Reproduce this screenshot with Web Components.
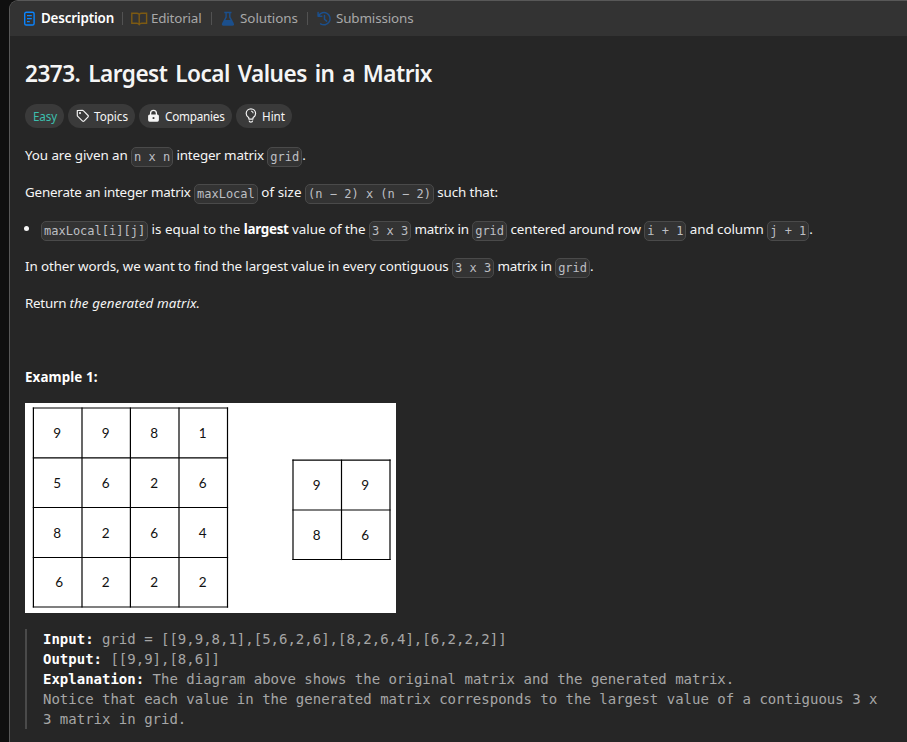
<!DOCTYPE html>
<html lang="en">
<head>
<meta charset="utf-8">
<title>2373. Largest Local Values in a Matrix</title>
<style>
html,body{margin:0;height:100%;background:#0f0f0f;overflow:hidden}
body{font:13.4px/20px "Noto Sans","Open Sans",sans-serif;color:#f5f5f5}
</style>
</head>
<body>
<problem-page></problem-page>
<script>
/* Text run that spreads its letters over a given width. */
class TextRun extends HTMLElement {
  connectedCallback() {
    this.attachShadow({mode: 'open'}).innerHTML =
      '<style>:host{display:inline-block;white-space:pre;text-indent:0}span{display:inline-block}</style><span><slot></slot></span>';
    const w = parseFloat(this.getAttribute('w'));
    this.style.width = w + 'px';
    const span = this.shadowRoot.querySelector('span');
    const natural = span.getBoundingClientRect().width;
    span.style.letterSpacing = ((w - natural) / this.textContent.length) + 'px';
  }
}

class InlineCode extends HTMLElement {
  constructor() {
    super();
    this.attachShadow({mode: 'open'}).innerHTML = `<style>
:host{display:inline-block;box-sizing:border-box;height:20px;padding:2px;border:1px solid #4a4a4a;border-radius:5px;background:#333;color:#bdbfc3;font:12px/14px "DejaVu Sans Mono",monospace;white-space:pre;vertical-align:-1px;margin:-4px 0}
</style><slot></slot>`;
  }
}

class TabItem extends HTMLElement {
  constructor() {
    super();
    this.attachShadow({mode: 'open'}).innerHTML = `<style>
:host{display:flex;align-items:center;color:#a8a8a8;box-sizing:border-box;height:20px}
:host([active]){color:#fff;font-weight:600}
::slotted(svg){flex:none;display:block}
::slotted(text-run){margin-top:-2px}
</style><slot name="icon"></slot><slot></slot>`;
  }
}

class TagChip extends HTMLElement {
  constructor() {
    super();
    this.attachShadow({mode: 'open'}).innerHTML = `<style>
:host{display:flex;align-items:center;box-sizing:border-box;height:24px;border-radius:12px;background:#3a3a3a;font-size:11.7px;padding-left:8px}
::slotted(svg){flex:none;display:block}
::slotted(text-run){margin-top:-1px}
</style><slot name="icon"></slot><slot></slot>`;
  }
}

/* Drawing of the source matrix and the resulting matrix. */
class MatrixFigure extends HTMLElement {
  connectedCallback() {
    const line = (x1, y1, x2, y2) => `<path d="M${x1} ${y1}H${x2}V${y2}H${x1}Z"/>`;
    const grid = (xs, ys, rows, dx = 0) => {
      let s = '';
      const xe = xs[xs.length - 1], ye = ys[ys.length - 1];
      xs.forEach(x => s += line(x - .6, ys[0] - .6, x + .6, ye + .6));
      ys.forEach(y => s += line(xs[0] - .6, y - .6, xe + .6, y + .6));
      rows.forEach((r, i) => r.forEach((n, j) => {
        const cx = (xs[j] + xs[j + 1]) / 2 - .5 + (dx && i === 3 && j === 0 ? dx : 0);
        s += `<text x="${cx}" y="${(ys[i] + ys[i + 1]) / 2 + 5.2}">${n}</text>`;
      }));
      return s;
    };
    this.attachShadow({mode: 'open'}).innerHTML = `<style>
:host{display:block;width:371px;height:210px;background:#fff}
svg{display:block}text{font:13.5px Lato,sans-serif;text-anchor:middle;fill:#111}
</style><svg width="371" height="210" fill="#000">
${grid([8.4, 57, 105.4, 154, 202.5], [5, 54.8, 104.5, 154.5, 204], [[9,9,8,1],[5,6,2,6],[8,2,6,4],[6,2,2,2]], 2)}
${grid([268, 316.5, 365], [57.2, 107, 156.5], [[9,9],[8,6]])}
</svg>`;
  }
}

class ExampleBlock extends HTMLElement {
  constructor() {
    super();
    this.attachShadow({mode: 'open'}).innerHTML = `<style>
:host{display:block;border-left:2px solid #4a4a4a;padding-left:16px;height:100px;font:14px/20px "DejaVu Sans Mono",monospace;color:#a6a6a6}
::slotted(div){white-space:pre}
</style><slot></slot>`;
  }
}

const page = document.createElement('template');
page.innerHTML = `<style>
:host{display:block;height:742px;padding-left:9px}
main{box-sizing:border-box;height:760px;border:1px solid #585858;border-right:0;border-radius:9px 0 0 0;background:#262626;overflow:hidden}
nav{display:flex;align-items:center;height:35px;background:#333;padding-left:13px;box-sizing:border-box}
nav i{width:1px;height:13px;background:#525252}
section{padding:25px 20px 0 15px}
h1{margin:0;font-size:22.6px;line-height:26px;font-weight:600;height:26px;word-spacing:2.5px}
.chips{display:flex;gap:4px;margin-top:17px}
p{margin:17px 0 0;height:20px;white-space:nowrap}
li{display:flex;align-items:center}
ul{list-style:none;margin:17px 0 0;padding:0;height:20px}
ul .row{white-space:nowrap;height:20px}
.dot{width:5px;height:5px;border-radius:50%;background:#f5f5f5;margin:0 12px 2px -1px}
matrix-figure{margin-top:16px}
example-block{margin-top:16px}
b{color:#fff}
</style>
<main>
<nav>
<tab-item active style="width:99px"><svg slot="icon" width="18" height="16" viewBox="0 0 18 16" fill="none" stroke="#0a84ff" stroke-width="1.4"><rect x="1.7" y="1.2" width="9.4" height="12.8" rx="1.6"/><path d="M4 4.6h4.8M4 7.6h4.8M4 10.6h2.8"/></svg><text-run w="73">Description</text-run></tab-item>
<i></i>
<tab-item style="width:88px;padding-left:8px"><svg slot="icon" width="20" height="16" viewBox="0 0 20 16" fill="none" stroke="#7d5a12" stroke-width="1.4"><path d="M8.2 3.4Q7.3 2.3 5.7 2.3H.8V12.3H5.8Q7.4 12.3 8.2 13.5Q9 12.3 10.6 12.3H15.6V2.3H10.7Q9.1 2.3 8.2 3.4V13.2"/></svg><text-run w="50.5">Editorial</text-run></tab-item>
<i></i>
<tab-item style="width:95px;padding-left:9px"><svg slot="icon" width="19" height="16" viewBox="0 0 19 16" fill="#1b4f8c"><path d="M3.3 .8H10.5V2.2H9.5V6.1L12.7 12Q13.8 14.8 11.4 14.8H2.5Q.1 14.8 1.2 12L4.4 6.1V2.2H3.3ZM5.8 2.2V6.5L4.4 9H9.5L8.1 6.5V2.2Z" fill-rule="evenodd"/></svg><text-run w="58">Solutions</text-run></tab-item>
<i></i>
<tab-item style="padding-left:9px"><svg slot="icon" width="19" height="16" viewBox="0 0 19 16" fill="none" stroke="#1b4f8c" stroke-width="1.5"><path d="M1.1 1.5V5.2H4.8M1.6 4.8A6.1 6.1 0 1 1 3.6 12.8M7.5 4.5V8.2L9.6 10.1" stroke-linecap="round" stroke-linejoin="round"/></svg><text-run w="77.5">Submissions</text-run></tab-item>
</nav>
<section>
<h1><text-run w="407">2373. Largest Local Values in a Matrix</text-run></h1>
<div class="chips">
<tag-chip style="width:39px;color:#3cbfae"><text-run w="24">Easy</text-run></tag-chip>
<tag-chip style="width:67px"><svg slot="icon" width="18" height="14" viewBox="0 0 18 14" fill="none" stroke="#f0f0f0" stroke-width="1.2" stroke-linejoin="round"><path d="M1.3 1.5L6.4 1.3Q7 1.3 7.5 1.8L12.1 6.5Q12.7 7.2 12.1 7.8L8 12.1Q7.3 12.7 6.6 12.1L1.8 7.4Q1.3 6.9 1.3 6.2Z"/><circle cx="4" cy="4.1" r=".45"/></svg><text-run w="34">Topics</text-run></tag-chip>
<tag-chip style="width:93px"><svg slot="icon" width="18" height="14" viewBox="0 0 18 14"><path d="M3.6 6V4.2a2.9 2.9 0 0 1 5.8 0V6" fill="none" stroke="#f5f5f5" stroke-width="1.3"/><path d="M2.6 5.5H10.4Q11.9 5.5 11.9 7V11Q11.9 12.7 10.4 12.7H2.6Q1.1 12.7 1.1 11V7Q1.1 5.5 2.6 5.5ZM6.5 7.9a1.1 1.1 0 1 0 .01 0Z" fill="#f5f5f5" fill-rule="evenodd"/></svg><text-run w="59.5">Companies</text-run></tag-chip>
<tag-chip style="width:56px"><svg slot="icon" width="18" height="16" viewBox="0 0 18 16" fill="none" stroke="#f0f0f0" stroke-width="1.2"><path d="M5 11.2L4.6 9.5Q2.2 8 2.2 5.6A4.7 4.7 0 0 1 11.6 5.6Q11.6 8 9.2 9.5L8.8 11.2ZM5.1 12.7Q5.4 14.2 6.9 14.2T8.7 12.7M7 3Q9 3.4 9.2 5.2"/></svg><text-run w="23">Hint</text-run></tag-chip>
</div>
<p><text-run w="106">You are given an </text-run><inline-code>n x n</inline-code><text-run w="94.2"> integer matrix </text-run><inline-code>grid</inline-code>.</p>
<p><text-run w="169">Generate an integer matrix </text-run><inline-code>maxLocal</inline-code><text-run w="47.3"> of size </text-run><inline-code>(n − 2) x (n − 2)</inline-code><text-run w="64"> such that:</text-run></p>
<ul><li><span class="dot"></span><div class="row"><inline-code>maxLocal[i][j]</inline-code><text-run w="95.5"> is equal to the </text-run><b><text-run w="45">largest</text-run></b><text-run w="80.4"> value of the </text-run><inline-code>3 x 3</inline-code><text-run w="61"> matrix in </text-run><inline-code>grid</inline-code><text-run w="137.2"> centered around row </text-run><inline-code>i + 1</inline-code><text-run w="80.8"> and column </text-run><inline-code>j + 1</inline-code>.</div></li></ul>
<p><text-run w="427">In other words, we want to find the largest value in every contiguous </text-run><inline-code>3 x 3</inline-code><text-run w="61"> matrix in </text-run><inline-code>grid</inline-code>.</p>
<p><text-run w="44.5">Return </text-run><em><text-run w="130.5">the generated matrix.</text-run></em></p>
<p></p>
<p><b><text-run w="72.5">Example 1:</text-run></b></p>
<matrix-figure></matrix-figure>
<example-block><div><b>Input:</b> grid = [[9,9,8,1],[5,6,2,6],[8,2,6,4],[6,2,2,2]]</div><div><b>Output:</b> [[9,9],[8,6]]</div><div><b>Explanation:</b> The diagram above shows the original matrix and the generated matrix.</div><div>Notice that each value in the generated matrix corresponds to the largest value of a contiguous 3 x
3 matrix in grid.</div></example-block>
</section>
</main>`;

class ProblemPage extends HTMLElement {
  constructor() {
    super();
    this.attachShadow({mode: 'open'}).append(page.content.cloneNode(true));
  }
}

customElements.define('inline-code', InlineCode);
customElements.define('tab-item', TabItem);
customElements.define('tag-chip', TagChip);
customElements.define('matrix-figure', MatrixFigure);
customElements.define('example-block', ExampleBlock);
customElements.define('problem-page', ProblemPage);
customElements.define('text-run', TextRun);
</script>
</body>
</html>
